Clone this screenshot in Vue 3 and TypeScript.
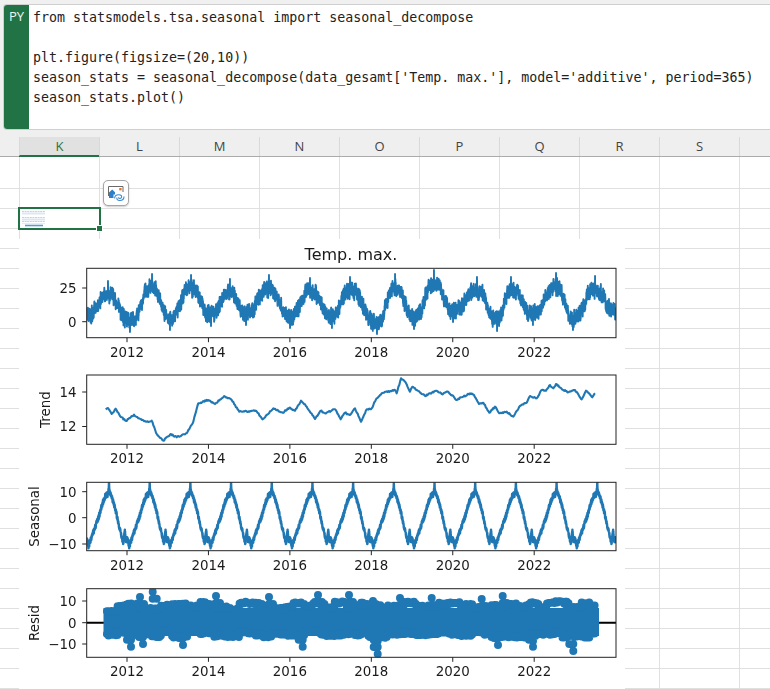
<script setup lang="ts">
type Pt = [number, number];

function rng(seed: number): () => number {
  let a = seed >>> 0;
  return () => {
    a = (a + 0x6d2b79f5) >>> 0;
    let t = a;
    t = Math.imul(t ^ (t >>> 15), t | 1);
    t ^= t + Math.imul(t ^ (t >>> 7), t | 61);
    return ((t ^ (t >>> 14)) >>> 0) / 4294967296;
  };
}

const columns = ["K", "L", "M", "N", "O", "P", "Q", "R", "S", ""];
const rows = Array.from({ length: 27 }, (_, i) => i);
const codeLines = [
  "from statsmodels.tsa.seasonal import seasonal_decompose",
  "",
  "plt.figure(figsize=(20,10))",
  "season_stats = seasonal_decompose(data_gesamt['Temp. max.'], model='additive', period=365)",
  "season_stats.plot()",
];

const LEFT = 86.7;
const RIGHT = 616;
const DAYS = 4748;
const dayX = (i: number) => LEFT + (i * (RIGHT - LEFT)) / DAYS;
const years = [2012, 2014, 2016, 2018, 2020, 2022];
const yearX = (y: number) => 127 + (y - 2012) * 40.72;

interface Panel {
  id: string;
  top: number;
  bottom: number;
  label: string;
  labelX: number;
  ticks: { text: string; y: number }[];
}

const panels: Panel[] = [
  { id: "p1", top: 268.3, bottom: 337.7, label: "", labelX: 0, ticks: [{ text: "25", y: 288 }, { text: "0", y: 321.7 }] },
  { id: "p2", top: 375, bottom: 444.3, label: "Trend", labelX: 50, ticks: [{ text: "14", y: 392 }, { text: "12", y: 426.5 }] },
  { id: "p3", top: 482.3, bottom: 550.7, label: "Seasonal", labelX: 39, ticks: [{ text: "10", y: 491.7 }, { text: "0", y: 517.7 }, { text: "−10", y: 544 }] },
  { id: "p4", top: 588.7, bottom: 657.3, label: "Resid", labelX: 39, ticks: [{ text: "10", y: 601 }, { text: "0", y: 622.7 }, { text: "−10", y: 644 }] },
];

function observedPath(): string {
  const r = rng(7);
  const extremes: Pt[] = [
    [108, 281], [130, 332], [152, 274], [170, 330], [191, 275], [211, 326], [230, 279],
    [246, 325], [269, 275], [290, 328], [310, 278], [332, 328], [350, 277], [377, 334], [395, 274],
    [414, 329], [434, 270], [453, 322], [477, 277], [497, 331], [511, 277], [533, 325], [556, 273],
    [573, 330], [595, 276],
  ];
  const mids: Pt[] = [
    [86, 316],
    ...extremes.map(([x, y]): Pt => [x, y < 300 ? y + 14 : y - 12]),
    [616, 312],
  ];
  let idx = 0;
  let n = 0;
  const out: string[] = [];
  const marked = new Map<number, number>();
  extremes.forEach(([x, y]) => marked.set(Math.round(((x - LEFT) / (RIGHT - LEFT)) * DAYS), y));
  for (let i = 0; i <= DAYS; i++) {
    const x = dayX(i);
    while (idx < mids.length - 2 && x > mids[idx + 1][0]) idx++;
    const a = mids[idx];
    const b = mids[idx + 1];
    const raw = Math.min(1, Math.max(0, (x - a[0]) / (b[0] - a[0])));
    const t = Math.min(1, Math.max(0, (raw - 0.12) / 0.76));
    const mid = a[1] + ((1 - Math.cos(Math.PI * t)) / 2) * (b[1] - a[1]);
    n = 0.55 * n + (r() - 0.5) * 9;
    let y = mid + Math.max(-9, Math.min(9, n + (r() - 0.5) * 9));
    const m = marked.get(i);
    if (m !== undefined) y = m;
    out.push(`${x.toFixed(2)} ${y.toFixed(1)}`);
  }
  return "M" + out.join("L");
}

function trendPath(): string {
  const pts: Pt[] = [
    [105.7, 409.3], [108, 408], [111.7, 414], [115.7, 408.7], [120, 416], [126, 421], [134, 414.7], [138.3, 418.3],
    [146.7, 421.7], [151.7, 420.7], [156, 432.7], [158.3, 436], [163.3, 440.7], [171, 434], [176.7, 437.3], [186.7, 433.3],
    [192.7, 423.3], [198.3, 403.3], [208.3, 400], [215, 404], [224.3, 396], [231.7, 400], [239.3, 411.7], [243, 411.7],
    [256, 410.7], [262.7, 419.3], [273.3, 408.3], [282.7, 412.7], [289.3, 407.7], [295, 410.7], [301, 400.7], [306.7, 406.7],
    [315, 419], [320.7, 410.7], [325, 413.3], [335, 409.3], [340.7, 419.3], [345, 412.7], [350, 415], [355, 408.3],
    [361, 421.7], [366.7, 409.3], [371.7, 408.3], [376, 399.3], [381.7, 393.3], [395, 390], [396.7, 393.3], [401, 378.3],
    [405, 381.7], [410, 391.7], [412.3, 386.7], [425, 396], [436, 390.7], [441.7, 394], [448.3, 391.7], [456.7, 400],
    [461.7, 397.3], [470, 393.3], [474, 395], [479, 404], [483.3, 402.7], [489.3, 412.7], [495, 406.7], [499.3, 413.3],
    [506.7, 411.7], [513.3, 416.7], [520, 406], [526.7, 402.7], [530, 396], [536.7, 398.3], [541.7, 390], [546, 390.7],
    [550, 385], [553.3, 388.3], [556, 384], [563.3, 390], [568.3, 392.3], [575, 390], [581.7, 399.3], [586, 390.7],
    [592.3, 397.3], [595, 393.3],
  ];
  const r = rng(21);
  const out: string[] = [];
  pts.forEach((p, i) => {
    const q = pts[i + 1];
    out.push(`${p[0]} ${p[1]}`);
    if (q) {
      const steps = Math.max(1, Math.floor((q[0] - p[0]) / 0.8));
      for (let s = 1; s < steps; s++) {
        const t = s / steps;
        out.push(`${(p[0] + (q[0] - p[0]) * t).toFixed(1)} ${(p[1] + (q[1] - p[1]) * t + (r() - 0.5) * 1.5).toFixed(1)}`);
      }
    }
  });
  return "M" + out.join("L");
}

function seasonalPath(): string {
  const shape: Pt[] = [
    [0, -8], [0.02, -9], [0.045, -11.5], [0.07, -9.5], [0.12, -7.5], [0.2, -4], [0.3, 0.5], [0.38, 5], [0.46, 8.4], [0.53, 9],
    [0.548, 12.6], [0.566, 9.6], [0.62, 7.6], [0.7, 3.5], [0.78, -2], [0.85, -7], [0.9, -9.5], [0.935, -5], [0.97, -9], [1, -8],
  ];
  const r = rng(3);
  const noise = Array.from({ length: 365 }, () => (r() - 0.5) * 1.9);
  const out: string[] = [];
  for (let i = 0; i <= DAYS; i++) {
    const d = i % 365;
    const ph = d / 365;
    let k = 0;
    while (k < shape.length - 2 && ph > shape[k + 1][0]) k++;
    const a = shape[k];
    const b = shape[k + 1];
    const v = a[1] + ((ph - a[0]) / (b[0] - a[0])) * (b[1] - a[1]) + noise[d];
    out.push(`${dayX(i).toFixed(2)} ${(517.7 - v * 2.62).toFixed(1)}`);
  }
  return "M" + out.join("L");
}

function residPath(): string {
  const r = rng(11);
  const outliers: Pt[] = [
    [140, 597], [152.7, 591.7], [216, 596], [269, 597], [318, 595], [349, 595], [373, 601], [400, 598], [431.7, 598],
    [481.7, 599], [502.7, 596], [566.7, 601.7], [131, 646.7], [143, 644], [183, 645], [302.7, 646.7], [377.7, 654],
    [377.7, 647], [377.7, 641], [498, 645], [533, 646.7], [533, 641], [573.3, 651],
  ];
  const segs: string[] = [];
  const dot = (x: number, y: number) => segs.push(`M${x.toFixed(1)} ${y.toFixed(1)}h0`);
  let x = 107;
  while (x <= 595) {
    const w = 5 + r() * 11;
    const narrow = x < 116 ? (116 - x) * 0.6 : 0;
    const top = 601 + r() * 7 + narrow;
    const bottom = 632 + r() * 6;
    for (let u = x; u < Math.min(x + w, 595.5); u += 1.5) {
      dot(u, top + r() * 2);
      dot(u, bottom - r() * 2);
    }
    x += w;
  }
  outliers.forEach(([ox, oy]) => {
    dot(ox, oy);
    const inner = oy < 622 ? oy + 7 : oy - 7;
    dot(ox, inner);
    dot(ox + (oy < 622 ? 4 : -4), inner);
  });
  return segs.join("");
}

const observed = observedPath();
const trend = trendPath();
const seasonal = seasonalPath();
const resid = residPath();
</script>

<template>
  <div class="app">
    <section class="formula">
      <div class="badge">PY</div>
      <pre class="code"><code v-for="(line, i) in codeLines" :key="i" class="line">{{ line }}</code></pre>
    </section>

    <header class="col-header">
      <div v-for="(c, i) in columns" :key="i" class="col" :class="{ active: c === 'K' }">{{ c }}</div>
    </header>

    <div class="grid">
      <div v-for="r in rows" :key="r" class="row" :class="{ first: r === 0 }">
        <div class="row-head"></div>
        <div v-for="(c, i) in columns" :key="i" class="cell"></div>
      </div>
    </div>

    <div class="selection">
      <svg class="thumb" width="23" height="18" viewBox="0 0 23 18">
        <path d="M0 1.5h23M0 7.5h23M0 11.5h23" stroke="#bcd6e9" stroke-width="1" stroke-dasharray="2 .6" />
        <path d="M0 3.5h23M0 9.5h23" stroke="#dbe8f3" stroke-width="2" />
        <path d="M0 13.5h23" stroke="#e3eef6" stroke-width="1" />
        <path d="M3 15.5h18" stroke="#5c9ccb" stroke-width="1.6" />
      </svg>
      <span class="handle"></span>
    </div>

    <button class="float-btn" type="button" aria-label="Bild in Zelle">
      <svg width="20" height="20" viewBox="0 0 20 20" fill="none">
        <path d="M2.5 13V3.5h14.5V9" stroke="#6a6a6a" stroke-width="1" />
        <rect x="13.2" y="5" width="2.4" height="2.4" fill="#e8792b" />
        <path d="M3 15V9.4L6.2 6.6l2.8 2.6v2.3H7.5V15z" fill="#2f7fc8" />
        <path d="M8.6 15.5c0-2.5 2-3.8 4.2-3.8 2.4 0 3.4 1.6 2.6 2.9-.8 1.2-2.9 1-3.1-.3" stroke="#3a8ad0" stroke-width="1.1" />
        <path d="M18 13.5c0 2.6-2 4-4.2 4-2.4 0-3.5-1.6-2.7-2.9" stroke="#3a8ad0" stroke-width="1.1" />
      </svg>
    </button>

    <svg class="chart" width="606" height="450" viewBox="19 239 606 450">
      <defs>
        <clipPath v-for="p in panels" :id="p.id" :key="p.id">
          <rect :x="LEFT" :y="p.top" :width="RIGHT - LEFT" :height="p.bottom - p.top" />
        </clipPath>
      </defs>
      <rect x="19" y="239" width="606" height="450" fill="#fff" />
      <text class="title" x="351" y="259.5" text-anchor="middle">Temp. max.</text>

      <g fill="none" stroke="#1f77b4" stroke-linejoin="round">
        <path :d="observed" stroke-width="1.9" clip-path="url(#p1)" />
        <path :d="trend" stroke-width="2.1" clip-path="url(#p2)" />
        <path :d="seasonal" stroke-width="2.4" clip-path="url(#p3)" />
      </g>
      <path d="M86.7 622.7H616" stroke="#000" stroke-width="2" />
      <g clip-path="url(#p4)">
        <rect x="103.5" y="608" width="495.5" height="28" fill="#1f77b4" />
        <path :d="resid" fill="none" stroke="#1f77b4" stroke-width="8" stroke-linecap="round" />
      </g>

      <g v-for="p in panels" :key="p.id + 'f'">
        <rect :x="LEFT" :y="p.top" :width="RIGHT - LEFT" :height="p.bottom - p.top" fill="none" stroke="#222" stroke-width="1" />
        <template v-for="y in years" :key="y">
          <path :d="`M${yearX(y)} ${p.bottom}v4.5`" stroke="#222" stroke-width="1" />
          <text class="tick" :x="yearX(y)" :y="p.bottom + 19" text-anchor="middle">{{ y }}</text>
        </template>
        <template v-for="t in p.ticks" :key="t.text">
          <path :d="`M${LEFT - 4.5} ${t.y}h4.5`" stroke="#222" stroke-width="1" />
          <text class="tick" x="76.5" :y="t.y + 4.8" text-anchor="end">{{ t.text }}</text>
        </template>
        <text
          v-if="p.label"
          class="tick"
          :transform="`translate(${p.labelX} ${(p.top + p.bottom) / 2}) rotate(-90)`"
          text-anchor="middle"
        >{{ p.label }}</text>
      </g>
    </svg>
  </div>
</template>

<style>
html,
body {
  margin: 0;
  background: #fff;
}
</style>

<style scoped>
.app {
  position: relative;
  width: 770px;
  height: 689px;
  overflow: hidden;
  background: #f0f0f0;
  padding-top: 4px;
  box-sizing: border-box;
}
.formula {
  display: flex;
  height: 126px;
  margin-left: 3px;
  box-sizing: border-box;
  background: #fff;
  border: 1px solid #cfcfcf;
  border-right: none;
  border-radius: 4px 0 0 4px;
  overflow: hidden;
}
.badge {
  width: 25px;
  flex: none;
  background: #217346;
  color: #f1f7f3;
  font: 13px/20px "Open Sans", sans-serif;
  text-align: center;
  padding-top: 1px;
}
.code {
  margin: 3px 0 0 4px;
  font: 13.3px/20px "DejaVu Sans Mono", "Liberation Mono", monospace;
  color: #222;
}
.line {
  display: block;
  min-height: 20px;
  font: inherit;
}
.col-header {
  display: flex;
  height: 27px;
  box-sizing: border-box;
  padding: 7px 0 0 19px;
  background: #efefef;
  border-bottom: 1px solid #ababab;
}
.col {
  flex: none;
  width: 80px;
  box-sizing: border-box;
  border-left: 1px solid #d9d9d9;
  text-align: center;
  font: 13px/19px "Open Sans", sans-serif;
  color: #444;
}
.col.active {
  height: 19px;
  background: #e1e1e1;
  color: #217346;
  box-shadow: 0 1px 0 #217346;
  border-bottom: 1px solid #217346;
  line-height: 18px;
}
.grid {
  background: #fff;
}
.row {
  display: flex;
  height: 20px;
  box-sizing: border-box;
  border-bottom: 1px solid #e0e0e0;
}
.row.first {
  height: 32px;
}
.row-head {
  flex: none;
  width: 19px;
}
.cell {
  flex: none;
  width: 80px;
  box-sizing: border-box;
  border-left: 1px solid #e0e0e0;
}
.selection {
  position: absolute;
  left: 18px;
  top: 207px;
  width: 83px;
  height: 23px;
  box-sizing: border-box;
  border: 2px solid #217346;
}
.thumb {
  position: absolute;
  left: 2px;
  top: 1px;
}
.handle {
  position: absolute;
  right: -4px;
  bottom: -4px;
  width: 5px;
  height: 5px;
  background: #217346;
  border: 1px solid #fff;
}
.float-btn {
  position: absolute;
  left: 103px;
  top: 180px;
  width: 26px;
  height: 26px;
  padding: 2px;
  display: flex;
  align-items: center;
  justify-content: center;
  box-sizing: border-box;
  background: #fff;
  border: 1px solid #a6a6a6;
  border-radius: 5px;
  box-shadow: 0 1px 2px rgba(0, 0, 0, 0.2);
}
.chart {
  position: absolute;
  left: 19px;
  top: 239px;
  display: block;
  filter: blur(0.3px);
}
.title {
  font: 16px "DejaVu Sans", sans-serif;
  fill: #1a1a1a;
}
.tick {
  font: 13.4px "DejaVu Sans", sans-serif;
  fill: #1a1a1a;
}
</style>
